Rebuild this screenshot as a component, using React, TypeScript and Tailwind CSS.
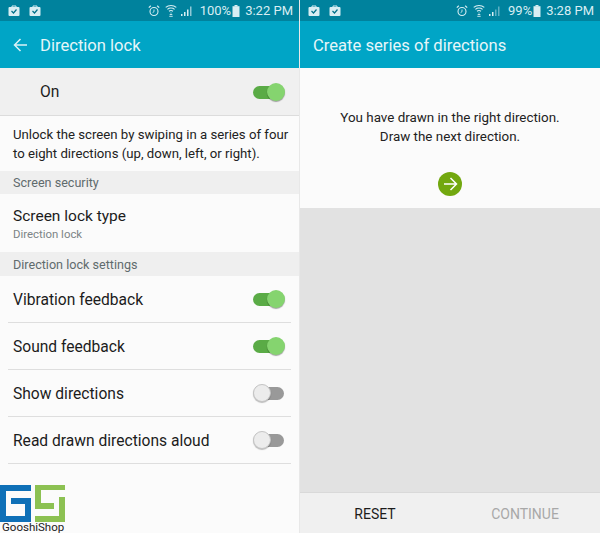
function BagIcon() {
	return (
		<svg width="12" height="11" viewBox="0 0 12 11">
			<path d="M4 2V1h4v1" fill="none" stroke="#d8eef3" strokeWidth="1" />
			<rect x="0.5" y="2" width="11" height="9" rx="1" fill="#d8eef3" />
			<path d="M3.5 6l2 2 3-3.5" fill="none" stroke="#00708a" strokeWidth="1.2" />
		</svg>
	);
}

function AlarmIcon() {
	return (
		<svg width="12" height="12" viewBox="0 0 12 12" fill="none" stroke="#d8eef3">
			<circle cx="6" cy="6.5" r="4" strokeWidth="1.1" />
			<path d="M6 4.5v2.2L4.6 7.6" strokeWidth="0.9" />
			<path d="M0.8 2.6L2.8 0.8M11.2 2.6L9.2 0.8" strokeWidth="1.2" />
		</svg>
	);
}

function WifiIcon() {
	return (
		<svg width="12" height="13" viewBox="0 0 12 13" fill="none" stroke="#d8eef3" strokeWidth="1.1">
			<path d="M0.7 3.4C3.6 0.8 8.4 0.8 11.3 3.4" />
			<path d="M2.4 5.4C4.4 3.7 7.6 3.7 9.6 5.4" />
			<path d="M4 7.3C5.2 6.4 6.8 6.4 8 7.3" />
			<path d="M6 8.5v1M4.7 10.5h2.6M4.3 12.3h3.4" strokeWidth="0.9" />
		</svg>
	);
}

function SignalIcon({ weak }: { weak?: boolean }) {
	return (
		<svg width="12" height="10" viewBox="0 0 12 10">
			<rect x="0" y="8" width="1.5" height="2" fill="#d8eef3" />
			<rect x="3" y="6" width="1.5" height="4" fill="#d8eef3" />
			<rect x="6" y="3.5" width="1.5" height="6.5" fill={weak ? "#5fb0c4" : "#d8eef3"} />
			<rect x="9" y="0.5" width="1.5" height="9.5" fill={weak ? "#5fb0c4" : "#8fc8d6"} />
		</svg>
	);
}

function BatteryIcon() {
	return (
		<svg width="8" height="12" viewBox="0 0 8 12">
			<rect x="2.5" y="0" width="3" height="1.5" fill="#d8eef3" />
			<rect x="0.5" y="1.2" width="7" height="10.8" fill="#d8eef3" />
		</svg>
	);
}

function StatusBar({ percent, time, weak }: { percent: string; time: string; weak?: boolean }) {
	return (
		<div className="h-[21px] bg-[#00829d] flex items-center pl-[8px] pr-[6px] text-[#d8eef3] text-[13px]">
			<div className="flex items-center gap-[9px]">
				<BagIcon />
				<BagIcon />
			</div>
			<div className="ml-auto flex items-center">
				<AlarmIcon />
				<span className="w-[5px]" />
				<WifiIcon />
				<span className="w-[4px]" />
				<SignalIcon weak={weak} />
				<span className="ml-[7px]">{percent}</span>
				<span className="ml-[1px]">
					<BatteryIcon />
				</span>
				<span className="ml-[5px]">{time}</span>
			</div>
		</div>
	);
}

function Toggle({ on }: { on?: boolean }) {
	return (
		<div className="relative w-[32px] h-[18px] shrink-0">
			{on ? (
				<>
					<div className="absolute left-0 right-[2px] top-[3px] h-[13px] rounded-full bg-[#5aab46]" />
					<div className="absolute right-0 top-0 w-[18px] h-[18px] rounded-full bg-[#85d46f] shadow-[0_1px_1px_rgba(0,0,0,0.35)]" />
				</>
			) : (
				<>
					<div className="absolute left-[6px] right-[1px] top-[3px] h-[13px] rounded-full bg-[#999999]" />
					<div className="absolute left-0 top-0 w-[18px] h-[18px] rounded-full bg-[#ececec] border border-[#c4c4c4] shadow-[0_1px_1px_rgba(0,0,0,0.25)]" />
				</>
			)}
		</div>
	);
}

function SectionHeader({ title, tall }: { title: string; tall?: boolean }) {
	return <div className={`${tall ? "h-[24px]" : "h-[23px]"} pt-[2px] bg-[#efefef] flex items-center px-[13px] text-[12.6px] text-[#5f6b6d]`}>{title}</div>;
}

function ToggleRow({ label, on }: { label: string; on?: boolean }) {
	return (
		<div className="h-[47px] mx-[8px] pl-[5px] pr-[6px] border-b border-[#dedede] flex items-center justify-between text-[15.6px] text-[#1c1c1c]">
			<span className="pt-[4px]">{label}</span>
			<Toggle on={on} />
		</div>
	);
}

function Logo() {
	return (
		<div className="mt-auto w-[66px]">
			<svg width="65" height="37" viewBox="0 0 65 37" className="block">
				<path d="M0 0h31v6H6v25h19V19H11v-6h20v24H0z" fill="#0f70b7" />
				<path d="M35 0h30v5H41v13h13v6H35z" fill="#8cc152" />
				<path d="M59 12h6v25H35v-6h24z" fill="#8cc152" />
			</svg>
			<div className="pl-[2px] text-[11.5px] leading-[11px] h-[11px] text-[#222222] whitespace-nowrap">GooshiShop</div>
		</div>
	);
}

export default function App() {
	return (
		<div className="w-[600px] h-[533px] flex overflow-hidden bg-[#fbfbfb] font-['Roboto',sans-serif]">
			{/* Left phone */}
			<div className="w-[299px] flex flex-col">
				<StatusBar percent="100%" time="3:22 PM" />
				<div className="h-[47px] bg-[#00a5c6] flex items-center pl-[13px] text-[16.6px]">
					<svg width="15" height="14" viewBox="0 0 15 14" fill="none" stroke="#d9f1f6" strokeWidth="1.5">
						<path d="M14 7H1.5M7.5 1L1.5 7l6 6" />
					</svg>
					<span className="ml-[12px] pt-[3px] text-[#e6f6f9]">Direction lock</span>
				</div>
				<div className="h-[48px] bg-[#f0f0f0] border-b border-[#dcdcdc] flex items-center justify-between pl-[40px] pr-[14px] text-[15.6px] text-[#1c1c1c]">
					<span className="pt-[2px]">On</span>
					<Toggle on />
				</div>
				<div className="h-[55px] px-[13px] flex items-center text-[13.2px] leading-[19px] text-[#222222]">
					<p className="whitespace-nowrap">
						Unlock the screen by swiping in a series of four
						<br />
						to eight directions (up, down, left, or right).
					</p>
				</div>
				<SectionHeader title="Screen security" />
				<div className="h-[58px] pt-[2px] px-[13px] flex flex-col justify-center">
					<div className="text-[15.5px] leading-[20px] text-[#1c1c1c]">Screen lock type</div>
					<div className="pt-[1px] text-[11.4px] leading-[15px] text-[#7c8486]">Direction lock</div>
				</div>
				<SectionHeader title="Direction lock settings" tall />
				<ToggleRow label="Vibration feedback" on />
				<ToggleRow label="Sound feedback" on />
				<ToggleRow label="Show directions" />
				<ToggleRow label="Read drawn directions aloud" />
				<Logo />
			</div>

			<div className="w-px bg-[#e8e8e8]" />

			{/* Right phone */}
			<div className="flex-1 flex flex-col">
				<StatusBar percent="99%" time="3:28 PM" weak />
				<div className="h-[47px] pt-[3px] bg-[#00a5c6] flex items-center pl-[13px] text-[16.6px] text-[#e6f6f9]">Create series of directions</div>
				<div className="h-[140px] flex flex-col items-center pt-[40px] text-[13.4px] leading-[19px] text-[#222222]">
					<p className="text-center whitespace-nowrap">
						You have drawn in the right direction.
						<br />
						Draw the next direction.
					</p>
					<div className="mt-[26px] w-[24px] h-[24px] rounded-full bg-[#72a80f] flex items-center justify-center">
						<svg width="15" height="14" viewBox="0 0 15 14" fill="none" stroke="#ffffff" strokeWidth="1.5">
							<path d="M1 7h12.5M7.5 1l6 6-6 6" />
						</svg>
					</div>
				</div>
				<div className="flex-1 bg-[#e2e2e2] border-b border-[#d9d9d9]" />
				<div className="h-[40px] pt-[2px] bg-[#f0f0f0] flex items-center text-[14px]">
					<div className="w-[150px] text-center text-[#1c1c1c]">RESET</div>
					<div className="w-[150px] text-center text-[#a8a8a8]">CONTINUE</div>
				</div>
			</div>
		</div>
	);
}
